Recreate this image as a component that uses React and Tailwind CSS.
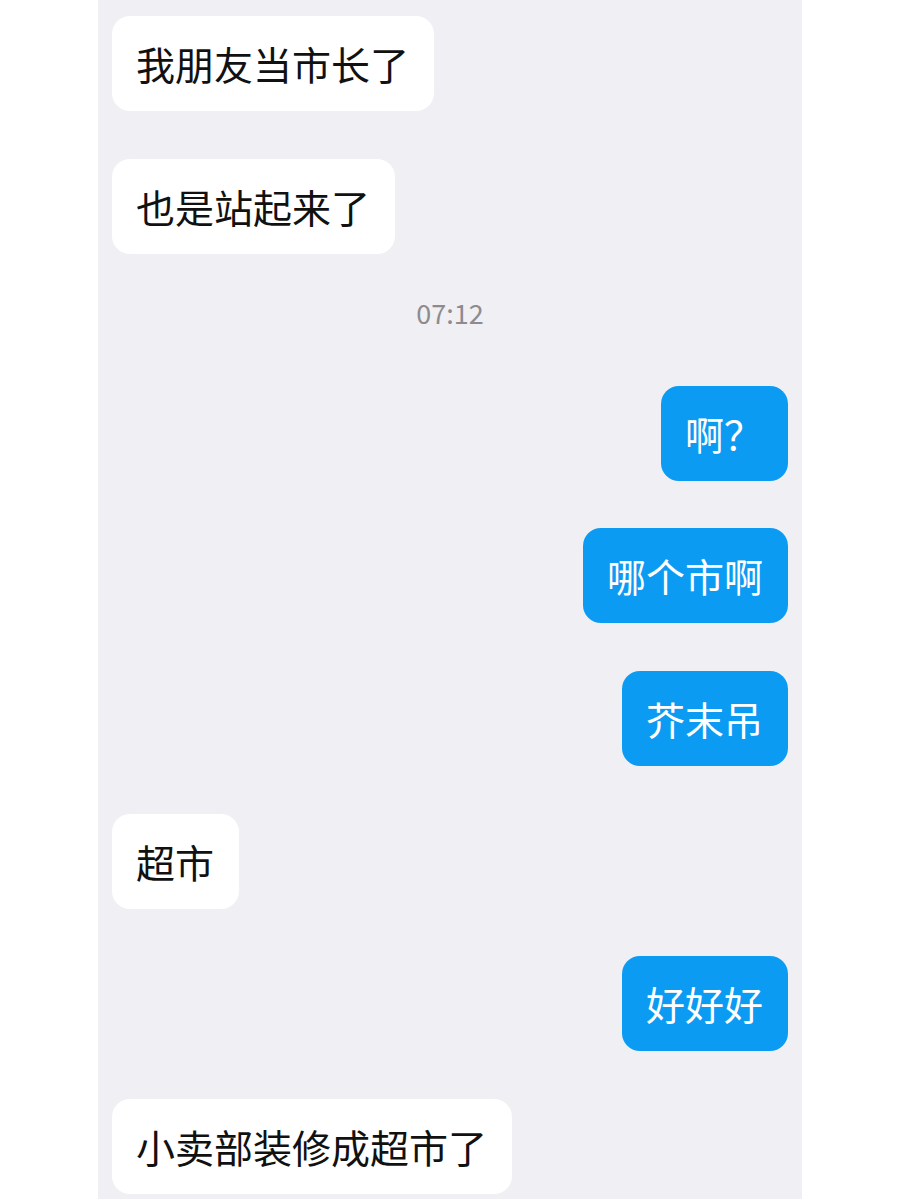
import React from "react";

const messages = [
  { side: "left", text: "我朋友当市长了" },
  { side: "left", text: "也是站起来了" },
  { time: "07:12" },
  { side: "right", text: "啊？" },
  { side: "right", text: "哪个市啊" },
  { side: "right", text: "芥末吊" },
  { side: "left", text: "超市" },
  { side: "right", text: "好好好" },
  { side: "left", text: "小卖部装修成超市了" },
];

function Bubble({ side, text }) {
  const mine = side === "right";
  return (
    <div className={mine ? "flex justify-end" : "flex justify-start"}>
      <div
        className={
          mine
            ? "bg-[#0c9bf3] text-white rounded-[18px] pl-6 pr-[25px] py-6 text-[39px] leading-[47px]"
            : "bg-white text-[#111111] rounded-[18px] pl-6 pr-[25px] py-6 text-[39px] leading-[47px]"
        }
      >
        {text}
      </div>
    </div>
  );
}

export default function App() {
  return (
    <div
      className="w-full min-h-[1199px] bg-white flex justify-center"
      style={{ fontFamily: '"Noto Sans CJK SC", "Noto Sans", sans-serif' }}
    >
      <div className="w-[704px] min-h-[1199px] bg-[#efeff4] px-[14px] pt-4 flex flex-col gap-[47.6px]">
        {messages.map((m, i) =>
          m.time ? (
            <div
              key={i}
              className="h-[37px] text-center text-[27px] leading-[24px] text-[#8c8c8f]"
            >
              {m.time}
            </div>
          ) : (
            <Bubble key={i} side={m.side} text={m.text} />
          )
        )}
      </div>
    </div>
  );
}
